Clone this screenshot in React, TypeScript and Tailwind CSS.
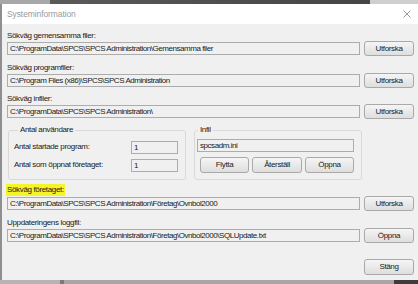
import React from "react";

const font = "font-['Liberation_Sans',Arial,sans-serif]";
const txt = "text-[8px] tracking-[-0.35px] text-[#1a1a1a]";

const TextBox = ({ value, className = "" }: { value: string; className?: string }) => (
  <div
    className={`h-[13px] border border-[#acacac] bg-[#f0f0f0] pl-[2px] leading-[11px] whitespace-nowrap overflow-hidden text-[8px] tracking-[-0.45px] text-[#1a1a1a] ${className}`}
  >
    {value}
  </div>
);

const Button = ({ label, className = "" }: { label: string; className?: string }) => (
  <div
    className={`flex items-center justify-center border border-[#a9a9a9] rounded-[3px] bg-gradient-to-b from-[#f5f5f5] to-[#dedede] ${txt} ${className}`}
  >
    {label}
  </div>
);

const PathRow = ({ label, value, action, highlight = false }: { label: string; value: string; action: string; highlight?: boolean }) => (
  <div className="flex flex-col">
    {highlight ? (
      <div className={`h-[12px] leading-[12px] ${txt}`}>
        <span className="inline-block -ml-[1px] px-[1px] bg-[#f4f42a]">{label}</span>
      </div>
    ) : (
      <div className={`h-[10px] leading-[10px] ${txt}`}>{label}</div>
    )}
    <div className="flex items-center gap-[4px] h-[15px]">
      <TextBox value={value} className="flex-1" />
      <Button label={action} className="w-[50px] h-[15px]" />
    </div>
  </div>
);

export default function App() {
  return (
    <div className={`w-[418px] h-[284px] overflow-hidden flex flex-col bg-[#f0f0f0] ${font}`}>
      {/* desktop behind the window */}
      <div className="h-[4px] flex">
        <div className="w-[50px] bg-[#a8a8a8]" />
        <div className="flex-1 bg-gradient-to-r from-[#5a5a5a] to-[#454545]" />
        <div className="w-[48px] bg-[#cfcfcf]" />
      </div>

      <div className="flex-1 flex">
        <div className="w-[2px] bg-[#8f8f8f]" />
        <div className="flex-1 flex flex-col">
          {/* title bar */}
          <div className="h-[20px] bg-white flex items-center justify-between pl-[5px] pr-[4px]">
            <span className="text-[8.5px] text-[#9a9a9a] tracking-[-0.1px]">Systeminformation</span>
            <svg width="8" height="8" viewBox="0 0 8 8" className="mr-[3px]">
              <path d="M0.5 0.5 L7.5 7.5 M7.5 0.5 L0.5 7.5" stroke="#8a8a8a" strokeWidth="0.9" />
            </svg>
          </div>

          {/* body */}
          <div className="flex-1 flex flex-col pl-[5px] pr-[4px] pt-[7px]">
            <PathRow
              label="Sökväg gemensamma filer:"
              value="C:\ProgramData\SPCS\SPCS Administration\Gemensamma filer"
              action="Utforska"
            />
            <div className="mt-[7px]">
              <PathRow
                label="Sökväg programfiler:"
                value="C:\Program Files (x86)\SPCS\SPCS Administration"
                action="Utforska"
              />
            </div>
            <div className="mt-[6px]">
              <PathRow
                label="Sökväg infiler:"
                value="C:\ProgramData\SPCS\SPCS Administration\"
                action="Utforska"
              />
            </div>

            {/* groups */}
            <div className="mt-[6px] flex gap-[8px] pl-[1px]">
              <fieldset className="w-[178px] border border-[#d9d9d9] rounded-[3px] pl-[5px] pr-[7px] pb-[8px]">
                <legend className={`ml-[4px] px-[2px] h-[10px] leading-[10px] ${txt}`}>Antal användare</legend>
                <div className="mt-[6px] flex items-center justify-between h-[12px]">
                  <span className={txt}>Antal startade program:</span>
                  <TextBox value="1" className="w-[47px] h-[12px]" />
                </div>
                <div className="mt-[6px] flex items-center justify-between h-[12px]">
                  <span className={txt}>Antal som öppnat företaget:</span>
                  <TextBox value="1" className="w-[47px] h-[12px]" />
                </div>
              </fieldset>

              <fieldset className="w-[168px] border border-[#d9d9d9] rounded-[3px] pl-[2px] pr-[7px] pb-[6px]">
                <legend className={`ml-[1px] px-[2px] h-[10px] leading-[10px] ${txt}`}>Infil</legend>
                <TextBox value="spcsadm.ini" className="mt-[4px] h-[12px]" />
                <div className="mt-[5px] flex gap-[3px] pl-[3px]">
                  <Button label="Flytta" className="w-[49px] h-[16px]" />
                  <Button label="Återställ" className="w-[50px] h-[16px]" />
                  <Button label="Öppna" className="w-[49px] h-[16px]" />
                </div>
              </fieldset>
            </div>

            <div className="mt-[4px]">
              <PathRow
                label="Sökväg företaget:"
                value="C:\ProgramData\SPCS\SPCS Administration\Företag\Ovnbol2000"
                action="Utforska"
                highlight
              />
            </div>
            <div className="mt-[7px]">
              <PathRow
                label="Uppdateringens loggfil:"
                value="C:\ProgramData\SPCS\SPCS Administration\Företag\Ovnbol2000\SQLUpdate.txt"
                action="Öppna"
              />
            </div>

            <div className="mt-[16px] flex justify-end">
              <Button label="Stäng" className="w-[50px] h-[16px]" />
            </div>
          </div>
        </div>
      </div>

      {/* taskbar edge */}
      <div className="h-[4px] flex">
        <div className="w-[60px] bg-[#b4b4b4]" />
        <div className="w-[4px] bg-[#7a7a7a]" />
        <div className="flex-1 bg-[#a6a6a6]" />
        <div className="w-[24px] bg-[#3c3c3c]" />
      </div>
    </div>
  );
}
